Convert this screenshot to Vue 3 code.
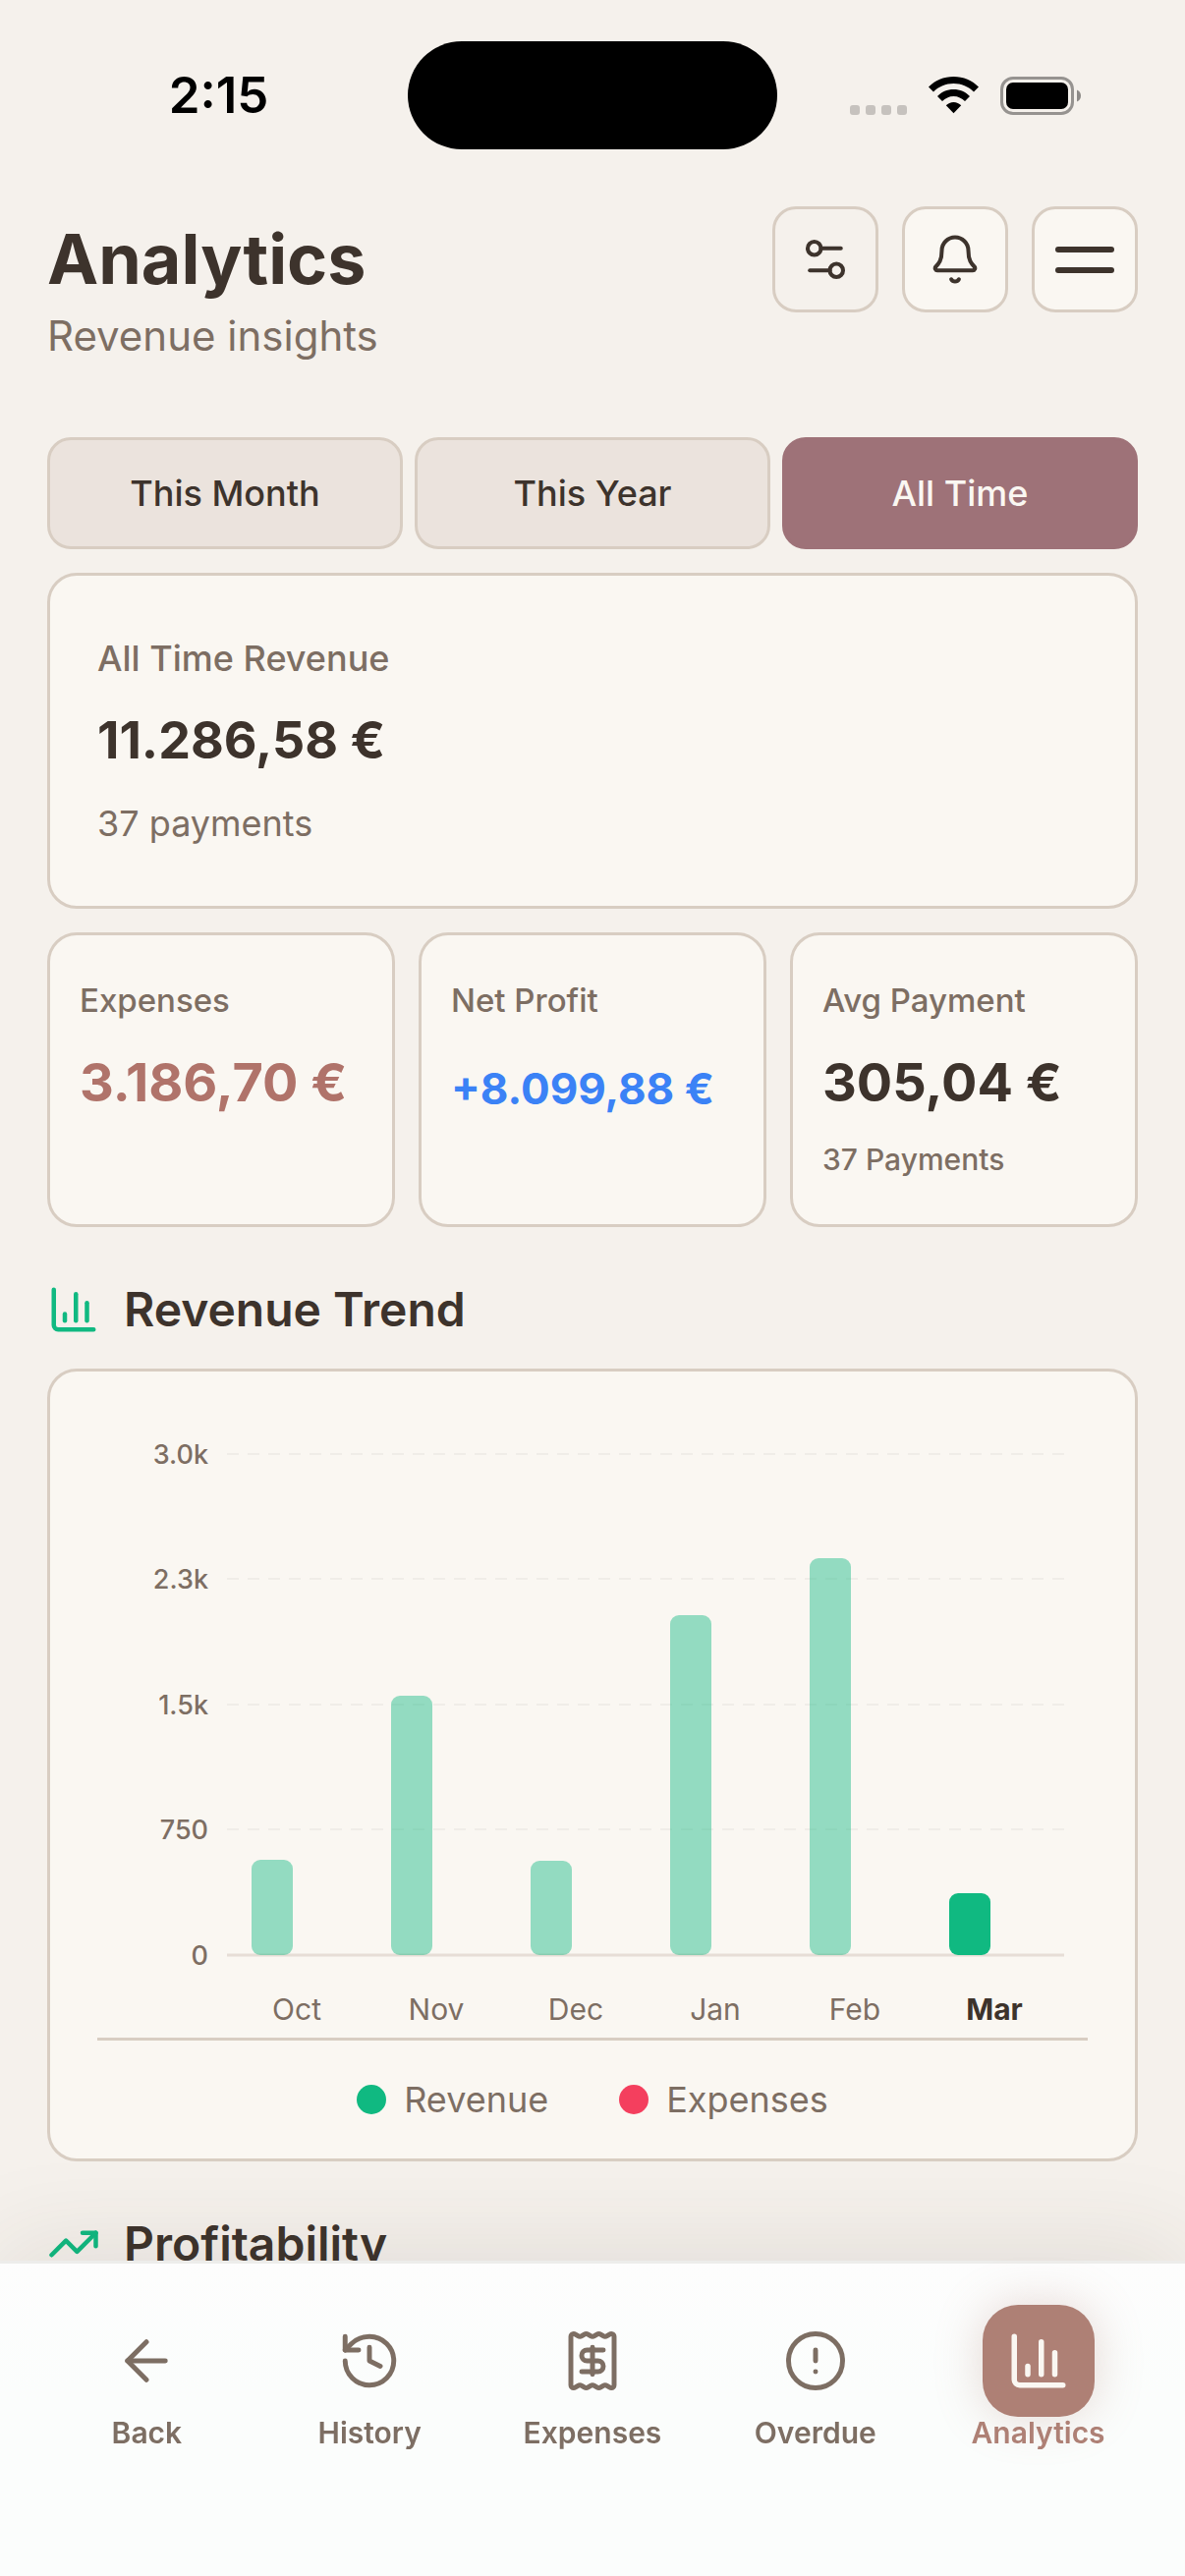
<script setup>
import { ref } from 'vue'

const periods = ['This Month', 'This Year', 'All Time']
const period = ref('All Time')

const stats = [
  { label: 'Expenses', value: '3.186,70 €', tone: 'expense' },
  { label: 'Net Profit', value: '+8.099,88 €', tone: 'profit' },
  { label: 'Avg Payment', value: '305,04 €', tone: 'plain', note: '37 Payments' },
]

const gridLines = [
  { label: '3.0k', y: 36 },
  { label: '2.3k', y: 163 },
  { label: '1.5k', y: 291 },
  { label: '750', y: 418 },
]
const baseline = 546

const months = [
  { name: 'Oct', height: 97 },
  { name: 'Nov', height: 264 },
  { name: 'Dec', height: 96 },
  { name: 'Jan', height: 346 },
  { name: 'Feb', height: 404 },
  { name: 'Mar', height: 63, current: true },
]

const chartIcon = ['M3 3v16a2 2 0 0 0 2 2h16', 'M18 17V9', 'M13 17V5', 'M8 17v-3']
const trendIcon = ['M16 7h6v6', 'm22 7-8.5 8.5-5-5L2 17']

const navItems = [
  { label: 'Back', paths: ['m12 19-7-7 7-7', 'M19 12H5'] },
  {
    label: 'History',
    paths: ['M3 12a9 9 0 1 0 9-9 9.75 9.75 0 0 0-6.74 2.74L3 8', 'M3 3v5h5', 'M12 7v5l4 2'],
  },
  {
    label: 'Expenses',
    paths: [
      'M4 3a1 1 0 0 1 1-1 1.3 1.3 0 0 1 .7.2l.933.6a1.3 1.3 0 0 0 1.4 0l.934-.6a1.3 1.3 0 0 1 1.4 0l.933.6a1.3 1.3 0 0 0 1.4 0l.933-.6a1.3 1.3 0 0 1 1.4 0l.934.6a1.3 1.3 0 0 0 1.4 0l.933-.6A1.3 1.3 0 0 1 19 2a1 1 0 0 1 1 1v18a1 1 0 0 1-1 1 1.3 1.3 0 0 1-.7-.2l-.933-.6a1.3 1.3 0 0 0-1.4 0l-.934.6a1.3 1.3 0 0 1-1.4 0l-.933-.6a1.3 1.3 0 0 0-1.4 0l-.933.6a1.3 1.3 0 0 1-1.4 0l-.934-.6a1.3 1.3 0 0 0-1.4 0l-.933.6a1.3 1.3 0 0 1-.7.2 1 1 0 0 1-1-1z',
      'M16 8h-6a2 2 0 0 0 0 4h4a2 2 0 0 1 0 4H8',
      'M12 17V7',
    ],
  },
  { label: 'Overdue', paths: ['M22 12a10 10 0 1 1-20 0 10 10 0 0 1 20 0Z', 'M12 8v4', 'M12 16h.01'] },
  { label: 'Analytics', paths: chartIcon, active: true },
]
</script>

<template>
  <div class="screen">
    <div class="status">
      <span class="time">2:15</span>
      <span class="island"></span>
      <span class="indicators">
        <span class="signal"><i></i><i></i><i></i><i></i></span>
        <svg class="wifi" viewBox="0 0 51 38" aria-hidden="true">
          <path d="M25.500 0C35.500 0 44.500 4 51 10.500L46 15.500C40.500 10 33.500 7 25.500 7S10.500 10 5 15.500L0 10.500C6.500 4 15.500 0 25.500 0Z" />
          <path d="M25.500 13C32 13 37.800 15.500 42 20L37 25C34 22 30 20 25.500 20S17 22 14 25L9 20C13.200 15.500 19 13 25.500 13Z" />
          <path d="M25.500 26C28.500 26 31.200 27.300 33.200 29.300L25.500 37.200L17.800 29.300C19.800 27.300 22.500 26 25.500 26Z" />
        </svg>
        <svg class="battery" viewBox="0 0 82 39" aria-hidden="true">
          <rect x="1.500" y="1.500" width="72" height="36" rx="11.500" fill="none" stroke="#969390" stroke-width="3" />
          <rect x="6" y="6" width="63" height="27" rx="7" />
          <path d="M78 13.500c2.500 1 4 3.200 4 6s-1.500 5-4 6Z" fill="#8d8a87" />
        </svg>
      </span>
    </div>

    <header class="header">
      <div class="titles">
        <h1>Analytics</h1>
        <p>Revenue insights</p>
      </div>
      <div class="actions">
        <button type="button" class="action ghost" aria-label="Filters">
          <svg class="icon" viewBox="0 0 24 24">
            <path d="M14 17H5" /><path d="M19 7h-9" />
            <circle cx="17" cy="17" r="3" /><circle cx="7" cy="7" r="3" />
          </svg>
        </button>
        <button type="button" class="action" aria-label="Notifications">
          <svg class="icon" viewBox="0 0 24 24">
            <path d="M10.268 21a2 2 0 0 0 3.464 0" />
            <path d="M3.262 15.326A1 1 0 0 0 4 17h16a1 1 0 0 0 .74-1.673C19.41 13.956 18 12.499 18 8A6 6 0 0 0 6 8c0 4.499-1.411 5.956-2.738 7.326" />
          </svg>
        </button>
        <button type="button" class="action menu" aria-label="Menu"><i></i><i></i></button>
      </div>
    </header>

    <main>
      <div class="periods">
        <button
          v-for="p in periods"
          :key="p"
          type="button"
          class="period"
          :class="{ selected: p === period }"
          :aria-pressed="p === period"
          @click="period = p"
        >{{ p }}</button>
      </div>

      <section class="card total">
        <p class="caption strong">All Time Revenue</p>
        <p class="amount">11.286,58 €</p>
        <p class="caption">37 payments</p>
      </section>

      <div class="stats">
        <section v-for="s in stats" :key="s.label" class="card stat">
          <p class="stat-label">{{ s.label }}</p>
          <p class="amount" :class="s.tone">{{ s.value }}</p>
          <p v-if="s.note" class="note">{{ s.note }}</p>
        </section>
      </div>

      <h2 class="section">
        <svg class="icon" viewBox="0 0 24 24" aria-hidden="true"><path v-for="d in chartIcon" :key="d" :d="d" /></svg>
        Revenue Trend
      </h2>

      <section class="card trend">
        <svg class="chart" viewBox="0 0 1008 630" role="img" aria-label="Revenue by month">
          <g v-for="g in gridLines" :key="g.label">
            <line class="grid" x1="132" x2="984" :y1="g.y" :y2="g.y" />
            <text class="tick" x="113" :y="g.y + 10">{{ g.label }}</text>
          </g>
          <line class="axis" x1="132" x2="984" :y1="baseline" :y2="baseline" />
          <text class="tick" x="113" :y="baseline + 10">0</text>
          <g v-for="(m, i) in months" :key="m.name" :class="{ current: m.current }">
            <rect class="bar" :x="157 + i * 142" :y="baseline - m.height" width="42" :height="m.height" rx="9" />
            <text class="month" :x="203 + i * 142" y="612">{{ m.name }}</text>
          </g>
        </svg>
        <div class="legend">
          <span class="key"><i class="dot revenue"></i>Revenue</span>
          <span class="key"><i class="dot expenses"></i>Expenses</span>
        </div>
      </section>

      <h2 class="section">
        <svg class="icon" viewBox="0 0 24 24" aria-hidden="true"><path v-for="d in trendIcon" :key="d" :d="d" /></svg>
        Profitability
      </h2>
    </main>

    <nav class="tabbar">
      <a v-for="n in navItems" :key="n.label" href="#" class="tab" :class="{ active: n.active }">
        <span class="tab-icon">
          <svg class="icon" viewBox="0 0 24 24" aria-hidden="true"><path v-for="d in n.paths" :key="d" :d="d" /></svg>
        </span>
        <span class="tab-label">{{ n.label }}</span>
      </a>
    </nav>
  </div>
</template>

<style>
body {
  margin: 0;
  background: #f5f1ec;
}
</style>

<style scoped>
.screen {
  font-family: Inter, "Liberation Sans", sans-serif;
  color: #3d332c;
}
h1, h2, p { margin: 0; }
button {
  font: inherit;
  color: inherit;
  padding: 0;
  box-sizing: border-box;
}

/* Status bar */
.status {
  display: grid;
  grid-template-columns: 1fr 376px 1fr;
  align-items: center;
  padding-top: 42px;
  height: 144px;
  align-content: start;
  color: #000;
}
.time {
  padding-left: 30px;
  text-align: center;
  font-size: 51px;
  line-height: 60px;
  font-weight: 600;
}
.island {
  height: 110px;
  border-radius: 55px;
  background: #000;
}
.indicators {
  display: flex;
  align-items: center;
  justify-content: center;
  gap: 22px;
  padding-right: 32px;
}
.signal {
  display: flex;
  align-self: flex-end;
  gap: 6px;
}
.signal i {
  width: 10px;
  height: 10px;
  border-radius: 3px;
  background: #c6c2be;
}
.wifi { width: 51px; height: 38px; }
.battery { width: 82px; height: 39px; }

/* Header */
.header {
  display: flex;
  justify-content: space-between;
  padding: 24px 48px 0;
}
.titles { padding-top: 12px; }
h1 {
  font-size: 70px;
  line-height: 84px;
  font-weight: 700;
}
.titles p {
  margin-top: 9px;
  font-size: 42px;
  line-height: 54px;
  color: #7d6e63;
}
.actions {
  display: flex;
  gap: 24px;
}
.action {
  display: flex;
  align-items: center;
  justify-content: center;
  width: 108px;
  height: 108px;
  border: 3px solid #d8cdc2;
  border-radius: 24px;
  background: #faf7f2;
}
.action.ghost { background: #f5f1ec; }
.action.menu {
  flex-direction: column;
  gap: 15px;
}
.menu i {
  width: 60px;
  height: 6px;
  border-radius: 3px;
  background: #3d332c;
}
.icon {
  width: 54px;
  height: 54px;
  fill: none;
  stroke: currentColor;
  stroke-width: 2;
  stroke-linecap: round;
  stroke-linejoin: round;
}
.action .icon { stroke-width: 1.8; }

main { padding: 76px 48px 0; }

/* Period switch */
.periods {
  display: flex;
  gap: 12px;
  margin-bottom: 24px;
}
.period {
  flex: 1;
  height: 114px;
  border: 3px solid #d8cdc2;
  border-radius: 24px;
  background: #ebe3dd;
  font-size: 36px;
  font-weight: 500;
}
.period.selected {
  border-color: #9e7278;
  background: #9e7278;
  color: #faf7f2;
}

/* Cards */
.card {
  border: 3px solid #d8cdc2;
  border-radius: 30px;
  background: #faf7f2;
}
.total {
  display: flex;
  flex-direction: column;
  gap: 12px;
  padding: 48px;
}
.caption {
  font-size: 36px;
  line-height: 72px;
  color: #7d6e63;
}
.caption.strong { font-weight: 500; }
.amount {
  font-size: 54px;
  line-height: 72px;
  font-weight: 700;
  white-space: nowrap;
}
.total .amount { font-size: 52px; }
.stats {
  display: grid;
  grid-template-columns: repeat(3, minmax(0, 1fr));
  gap: 24px;
  margin-top: 24px;
}
.stat {
  display: flex;
  flex-direction: column;
  gap: 12px;
  padding: 30px 30px 36px;
}
.stat-label {
  font-size: 33px;
  line-height: 72px;
  font-weight: 500;
  color: #7d6e63;
}
.stat .expense { color: #b0736a; }
.stat .profit {
  font-size: 44px;
  line-height: 84px;
  color: #3b82f6;
}
.note {
  font-size: 30px;
  line-height: 60px;
  font-weight: 500;
  color: #7d6e63;
}

/* Section headings */
.section {
  display: flex;
  align-items: center;
  gap: 24px;
  margin: 54px 0 30px;
  font-size: 48px;
  line-height: 60px;
  font-weight: 600;
}
.section .icon { color: #10b981; }

/* Chart */
.trend { padding: 48px 48px 36px; }
.chart {
  display: block;
  width: 100%;
  height: auto;
}
.grid {
  stroke: #f0ede8;
  stroke-width: 2;
  stroke-dasharray: 12 9;
}
.axis {
  stroke: #e6ddd6;
  stroke-width: 3;
}
.tick {
  font-size: 27px;
  font-weight: 500;
  text-anchor: end;
  fill: #7d6e63;
}
.bar {
  fill: #10b981;
  fill-opacity: 0.44;
}
.month {
  font-size: 30px;
  text-anchor: middle;
  fill: #7d6e63;
}
.current .bar { fill-opacity: 1; }
.current .month {
  font-weight: 700;
  fill: #3d332c;
}
.legend {
  display: flex;
  justify-content: center;
  gap: 72px;
  padding-top: 36px;
  border-top: 3px solid #d8cdc2;
}
.key {
  display: flex;
  align-items: center;
  gap: 18px;
  font-size: 36px;
  line-height: 48px;
  color: #7d6e63;
}
.dot {
  width: 30px;
  height: 30px;
  border-radius: 50%;
}
.dot.revenue { background: #10b981; }
.dot.expenses { background: #f43f5e; }

/* Bottom navigation */
.tabbar {
  position: fixed;
  left: 0;
  right: 0;
  bottom: 0;
  display: flex;
  padding: 42px 36px 130px;
  border-top: 3px solid #ededeb;
  background: linear-gradient(#fdfdfd, #fbfdfc 40%);
  box-shadow: 0 -12px 96px rgba(60, 45, 35, 0.1);
}
.tab {
  flex: 1;
  display: flex;
  flex-direction: column;
  align-items: center;
  color: #7d6e63;
  text-decoration: none;
}
.tab-icon {
  display: flex;
  align-items: center;
  justify-content: center;
  width: 114px;
  height: 114px;
  border-radius: 36px;
}
.tab-icon .icon {
  width: 66px;
  height: 66px;
  stroke-width: 1.8;
}
.tab-label {
  position: relative;
  font-size: 30px;
  line-height: 32px;
  font-weight: 600;
}
.active { color: #ae8075; }
.active .tab-icon {
  background: #ae8075;
  color: #faf7f2;
  box-shadow: 0 0 48px rgba(174, 128, 117, 0.3);
}
.active .icon { stroke-width: 2; }
</style>
